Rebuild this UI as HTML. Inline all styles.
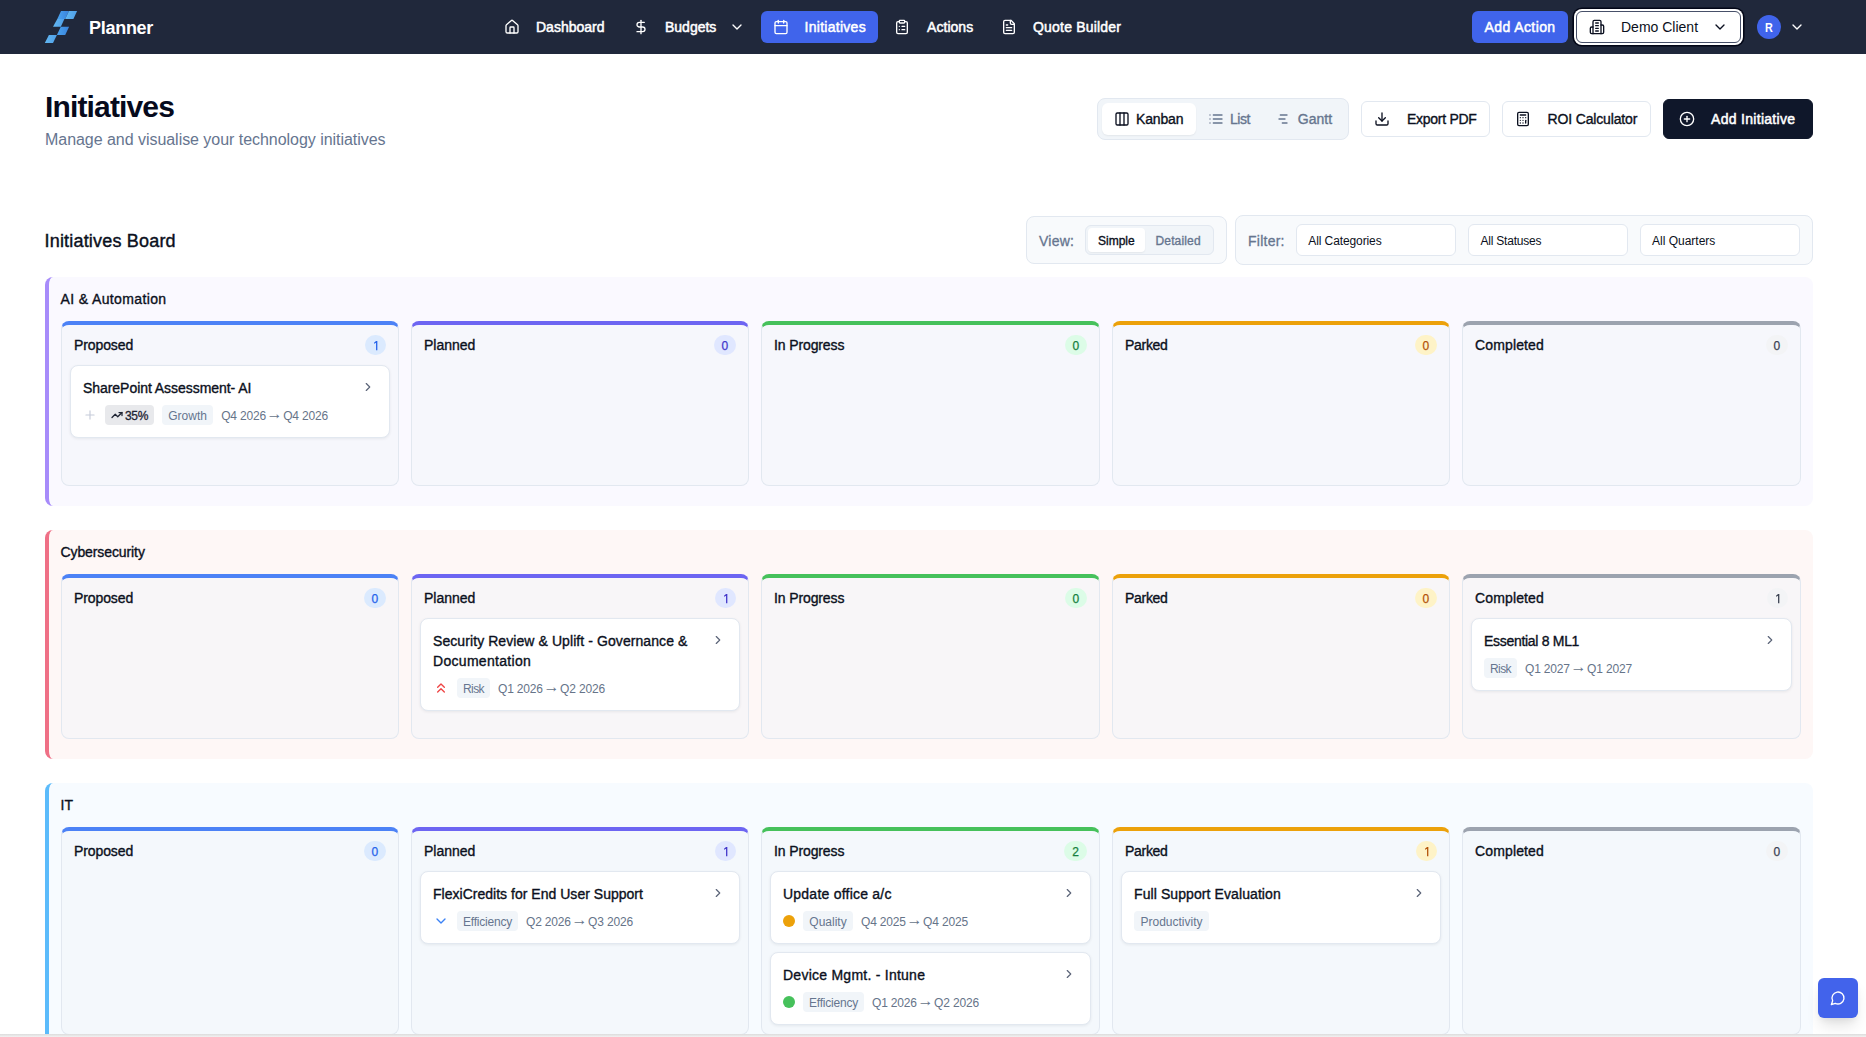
<!DOCTYPE html>
<html lang="en">
<head>
<meta charset="utf-8">
<title>Planner - Initiatives</title>
<style>
*{box-sizing:border-box;margin:0;padding:0}
html,body{width:1866px;height:1037px;overflow:hidden;background:#fff}
body{font-family:"Liberation Sans",sans-serif;color:#0b1020;position:relative;-webkit-font-smoothing:antialiased}
.abs{position:absolute}
svg.ic{fill:none;stroke:currentColor;stroke-width:2;stroke-linecap:round;stroke-linejoin:round;display:block;flex:none}
.t{position:absolute;white-space:nowrap;line-height:20px}
.sb{-webkit-text-stroke:0.35px currentColor}
#nav .sb{-webkit-text-stroke:0.5px currentColor}

/* NAV */
#nav{position:absolute;left:0;top:0;width:1866px;height:54px;background:#20283b}
#nav .t{color:#fff;font-size:14px;top:17px}
#nav svg.ic{position:absolute;color:#fff;width:16px;height:16px;top:19px}
.navact{position:absolute;left:761px;top:11px;width:117px;height:32px;border-radius:6px;background:#4064eb}
#addaction{position:absolute;left:1472px;top:11px;width:96px;height:32px;border-radius:6px;background:#4064eb}
#client{position:absolute;left:1576px;top:11px;width:165px;height:32px;border-radius:6px;background:#fff;border:1px solid #475069;box-shadow:0 0 0 2px #fff,0 0 0 3.6px #020617}
#avatar{position:absolute;left:1757px;top:15px;width:24px;height:24px;border-radius:50%;background:#4064eb}

/* HEADER */
#h1{left:45px;top:87px;font-size:30px;line-height:40px;font-weight:bold;letter-spacing:-0.85px;color:#060a1c}
#sub{left:45px;top:128.2px;letter-spacing:-0.04px;font-size:16px;line-height:24px;color:#66758f}
#tabs{position:absolute;left:1097px;top:98px;width:252px;height:42px;border-radius:8px;background:#f1f5f9;border:1px solid #e2e8f0}
#tabact{position:absolute;left:1102px;top:103px;width:94px;height:32px;border-radius:6px;background:#fff;box-shadow:0 1px 2px rgba(0,0,0,.06)}
.btn{position:absolute;border-radius:6px;background:#fff;border:1px solid #e2e8f0}
.hb{font-size:14px;top:109px;color:#0b1020}
.hic{position:absolute;width:16px;height:16px;top:111px}

/* BOARD TOOLBAR */
#bh{left:44.5px;top:229px;letter-spacing:0.19px;font-size:18px;line-height:24px;color:#0b1020;-webkit-text-stroke:0.4px currentColor}
.box{position:absolute;border-radius:8px;background:#f8fafc;border:1px solid #e2e8f0}
.lbl{font-size:14px;color:#66758f;top:231px;-webkit-text-stroke:0.3px currentColor}
#tog{position:absolute;left:1085px;top:225px;width:129px;height:30px;border-radius:6px;background:#f1f5f9;border:1px solid #e2e8f0}
#togact{position:absolute;left:1088px;top:228px;width:57px;height:24px;border-radius:4px;background:#fff;box-shadow:0 1px 2px rgba(0,0,0,.06)}
.tg{font-size:12px;top:231px}
.sel{position:absolute;top:224px;width:160px;height:32px;border-radius:6px;background:#fff;border:1px solid #e2e8f0}
.selt{font-size:12px;top:231px;color:#0b1020}

/* GROUPS */
.grp{position:absolute;left:45px;width:1768px;border-left:4px solid;border-radius:8px}
.g1{top:277px;height:229px;border-color:#a78bfa;background:#faf9ff}
.g2{top:530px;height:229px;border-color:#ef7086;background:#fef7f6}
.g3{top:783px;height:300px;border-color:#5bbbfb;background:#f7fbff}
.gt{left:11.5px;top:12px;font-size:14px;color:#0b1020;-webkit-text-stroke:0.35px currentColor}
.col{position:absolute;top:44px;width:338px;height:165px;border:1px solid #e2e8f0;border-top:4px solid;border-radius:8px;background:rgba(241,245,249,.5)}
.g3 .col{height:208px}
.c0{left:12px}.c1{left:362px}.c2{left:712px;width:339px}.c3{left:1063px}.c4{left:1413px;width:339px}
.s0{border-top-color:#4c82f6}.s1{border-top-color:#6d65f2}.s2{border-top-color:#46c15b}.s3{border-top-color:#eca10a}.s4{border-top-color:#9ca3af}
.ct{left:12px;top:10px;font-size:14px;color:#0b1020;-webkit-text-stroke:0.35px currentColor}
.cnt{position:absolute;right:12px;top:10px;width:20px;height:20px;border-radius:10px;font-size:12px;line-height:22px;text-align:center;-webkit-text-stroke:0.25px currentColor}
.s0 .cnt{background:#dbeafe;color:#2563eb}
.s1 .cnt{background:#e0e7ff;color:#4338ca}
.s2 .cnt{background:#dcfce7;color:#15803d}
.s3 .cnt{background:#fef3c7;color:#b45309}
.s4 .cnt{background:#f3f4f6;color:#3b4252}
.card{position:absolute;left:8px;right:8px;top:40px;height:73px;border-radius:8px;background:#fff;border:1px solid #e2e8f0;box-shadow:0 1px 3px rgba(15,23,42,.07)}
.card.two{height:93px}
.card.n2{top:121px}
.ctl{position:absolute;left:12px;top:13px;font-size:14px;line-height:19.5px;color:#0b1020;-webkit-text-stroke:0.35px currentColor;white-space:nowrap}
.cchev{position:absolute;right:14.4px;top:14px;width:14px;height:14px;color:#5b6478}
.row{position:absolute;left:12px;bottom:12.5px;height:20px;display:flex;align-items:center;gap:8px;white-space:nowrap}
.bdg{height:20px;line-height:22px;padding:0;text-align:center;border-radius:4px;background:#f1f5f9;color:#66758f;font-size:12px}
.roi{display:flex;align-items:center;height:20px;padding:0 6px;border-radius:4px;background:#e8e9ec;color:#1e2433;font-size:12px;gap:2px;letter-spacing:-0.3px;-webkit-text-stroke:0.3px currentColor}
.date{font-size:12px;color:#667489;line-height:20px;letter-spacing:-0.17px;position:relative;top:1px}
.ar{margin:0 0.6px;font-size:16px;line-height:0;letter-spacing:0;position:relative;top:-0.5px}
.dot{width:12px;height:12px;border-radius:50%;flex:none}

#chat{position:absolute;left:1818px;top:978px;width:40px;height:40px;border-radius:6px;background:#4263eb;box-shadow:0 10px 15px -3px rgba(0,0,0,.12),0 4px 6px -2px rgba(0,0,0,.06)}
#strip{position:absolute;left:0;top:1034px;width:1866px;height:3px;background:linear-gradient(#dcdcdc,#f2f2f2)}
</style>
</head>
<body>

<!-- ============ NAV ============ -->
<div id="nav">
  <svg class="abs" style="left:44px;top:10px" width="34" height="34" viewBox="44 10 34 34">
    <defs>
      <linearGradient id="gd" x1="0" y1="0" x2="1" y2="0"><stop offset="0" stop-color="#4aa3ef"/><stop offset="1" stop-color="#3a83dc"/></linearGradient>
      <linearGradient id="gl" x1="0" y1="0" x2="1" y2="0"><stop offset="0" stop-color="#62b8f2"/><stop offset="1" stop-color="#4f9fe8"/></linearGradient>
    </defs>
    <polygon points="61,10.9 68.9,10.9 65.2,18.9 57.3,18.9" fill="url(#gd)"/>
    <polygon points="68.9,10.9 77.1,10.9 73.4,18.9 65.2,18.9" fill="url(#gl)"/>
    <polygon points="57.3,18.9 64.4,18.9 60.8,26.8 53,26.8" fill="url(#gl)"/>
    <polygon points="60.8,26.8 69.1,26.8 65.2,34.9 56.9,34.9" fill="url(#gd)"/>
    <polygon points="48.9,34.9 56.9,34.9 53,43 44.8,43" fill="url(#gl)"/>
  </svg>
  <div class="t" style="left:89px;top:16px;font-size:18px;line-height:24px;font-weight:bold;letter-spacing:-0.28px" id="t_planner">Planner</div>

  <svg class="ic" style="left:504px" viewBox="0 0 24 24"><path d="M15 21v-8a1 1 0 0 0-1-1h-4a1 1 0 0 0-1 1v8"/><path d="M3 10a2 2 0 0 1 .709-1.528l7-5.999a2 2 0 0 1 2.582 0l7 5.999A2 2 0 0 1 21 10v9a2 2 0 0 1-2 2H5a2 2 0 0 1-2-2z"/></svg>
  <div class="t sb" style="left:536px" id="t_dash">Dashboard</div>

  <svg class="ic" style="left:633px" viewBox="0 0 24 24"><line x1="12" x2="12" y1="2" y2="22"/><path d="M17 5H9.5a3.5 3.5 0 0 0 0 7h5a3.5 3.5 0 0 1 0 7H6"/></svg>
  <div class="t sb" style="left:665px" id="t_budg">Budgets</div>
  <svg class="ic" style="left:729px" viewBox="0 0 24 24"><path d="m6 9 6 6 6-6"/></svg>

  <div class="navact"></div>
  <svg class="ic" style="left:773px" viewBox="0 0 24 24"><path d="M8 2v4"/><path d="M16 2v4"/><rect width="18" height="18" x="3" y="4" rx="2"/><path d="M3 10h18"/></svg>
  <div class="t sb" style="left:804.5px;letter-spacing:0.28px" id="t_init">Initiatives</div>

  <svg class="ic" style="left:894px" viewBox="0 0 24 24"><rect width="8" height="4" x="8" y="2" rx="1" ry="1"/><path d="M16 4h2a2 2 0 0 1 2 2v14a2 2 0 0 1-2 2H6a2 2 0 0 1-2-2V6a2 2 0 0 1 2-2h2"/><path d="M12 11h4"/><path d="M12 16h4"/><path d="M8 11h.01"/><path d="M8 16h.01"/></svg>
  <div class="t sb" style="left:927px;letter-spacing:0.05px" id="t_act">Actions</div>

  <svg class="ic" style="left:1001px" viewBox="0 0 24 24"><path d="M15 2H6a2 2 0 0 0-2 2v16a2 2 0 0 0 2 2h12a2 2 0 0 0 2-2V7Z"/><path d="M14 2v4a2 2 0 0 0 2 2h4"/><path d="M10 9H8"/><path d="M16 13H8"/><path d="M16 17H8"/></svg>
  <div class="t sb" style="left:1033px;letter-spacing:0.2px" id="t_quote">Quote Builder</div>

  <div id="addaction"></div>
  <div class="t sb" style="left:1484.6px;letter-spacing:0.4px" id="t_addact">Add Action</div>

  <div id="client"></div>
  <svg class="ic" style="left:1589px;color:#0b1020" viewBox="0 0 24 24"><path d="M6 22V4a2 2 0 0 1 2-2h8a2 2 0 0 1 2 2v18Z"/><path d="M6 12H4a2 2 0 0 0-2 2v6a2 2 0 0 0 2 2h2"/><path d="M18 9h2a2 2 0 0 1 2 2v9a2 2 0 0 1-2 2h-2"/><path d="M10 6h4"/><path d="M10 10h4"/><path d="M10 14h4"/><path d="M10 18h4"/></svg>
  <div class="t" style="left:1621px;color:#0b1020" id="t_client">Demo Client</div>
  <svg class="ic" style="left:1712px;color:#0b1020" viewBox="0 0 24 24"><path d="m6 9 6 6 6-6"/></svg>

  <div id="avatar"></div>
  <div class="t" style="left:1765px;top:18px;font-size:12px;font-weight:bold;-webkit-text-stroke:0;transform:scaleX(.9);transform-origin:left" id="t_R">R</div>
  <svg class="ic" style="left:1789px" viewBox="0 0 24 24"><path d="m6 9 6 6 6-6"/></svg>
</div>

<!-- ============ PAGE HEADER ============ -->
<div class="t" id="h1">Initiatives</div>
<div class="t" id="sub">Manage and visualise your technology initiatives</div>

<div id="tabs"></div>
<div id="tabact"></div>
<svg class="ic hic" style="left:1114px" viewBox="0 0 24 24"><rect width="18" height="18" x="3" y="3" rx="2"/><path d="M9 3v18"/><path d="M15 3v18"/></svg>
<div class="t hb sb" style="left:1136px;letter-spacing:-0.15px" id="t_kanban">Kanban</div>
<svg class="ic hic" style="left:1208px;color:#66758f" viewBox="0 0 24 24"><path d="M3 12h.01"/><path d="M3 18h.01"/><path d="M3 6h.01"/><path d="M8 12h13"/><path d="M8 18h13"/><path d="M8 6h13"/></svg>
<div class="t hb sb" style="left:1230px;color:#66758f;letter-spacing:-0.45px" id="t_list">List</div>
<svg class="ic hic" style="left:1275px;color:#66758f" viewBox="0 0 24 24"><path d="M8 6h10"/><path d="M6 12h9"/><path d="M11 18h7"/></svg>
<div class="t hb sb" style="left:1297.8px;color:#66758f" id="t_gantt">Gantt</div>

<div class="btn" style="left:1361px;top:101px;width:129px;height:36px"></div>
<svg class="ic hic" style="left:1374px" viewBox="0 0 24 24"><path d="M21 15v4a2 2 0 0 1-2 2H5a2 2 0 0 1-2-2v-4"/><polyline points="7 10 12 15 17 10"/><line x1="12" x2="12" y1="15" y2="3"/></svg>
<div class="t hb sb" style="left:1407px;letter-spacing:-0.27px" id="t_export">Export PDF</div>

<div class="btn" style="left:1502px;top:101px;width:149px;height:36px"></div>
<svg class="ic hic" style="left:1515px" viewBox="0 0 24 24"><rect width="16" height="20" x="4" y="2" rx="2"/><line x1="8" x2="16" y1="6" y2="6"/><line x1="16" x2="16" y1="14" y2="18"/><path d="M16 10h.01"/><path d="M12 10h.01"/><path d="M8 10h.01"/><path d="M12 14h.01"/><path d="M8 14h.01"/><path d="M12 18h.01"/><path d="M8 18h.01"/></svg>
<div class="t hb sb" style="left:1547.5px;letter-spacing:-0.15px" id="t_roi">ROI Calculator</div>

<div class="btn" style="left:1663px;top:99px;width:150px;height:40px;background:#0f172a;border-color:#0f172a"></div>
<svg class="ic hic" style="left:1679px;color:#fff" viewBox="0 0 24 24"><circle cx="12" cy="12" r="10"/><path d="M8 12h8"/><path d="M12 8v8"/></svg>
<div class="t hb sb" style="left:1711px;color:#fff;letter-spacing:0.3px;-webkit-text-stroke:0.5px #fff" id="t_addinit">Add Initiative</div>

<div class="t" id="bh">Initiatives Board</div>
<div class="box" style="left:1026px;top:216px;width:201px;height:48px"></div>
<div class="t lbl" style="left:1039px;letter-spacing:0.25px" id="t_view">View:</div>
<div id="tog"></div><div id="togact"></div>
<div class="t tg sb" style="left:1098px;color:#0b1020" id="t_simple">Simple</div>
<div class="t tg sb" style="left:1155.5px;color:#66758f;letter-spacing:0.15px" id="t_detailed">Detailed</div>
<div class="box" style="left:1235px;top:215px;width:578px;height:50px"></div>
<div class="t lbl" style="left:1248px;letter-spacing:0.25px" id="t_filter">Filter:</div>
<div class="sel" style="left:1296px"></div><div class="t selt" style="left:1308.3px;letter-spacing:-0.1px" id="t_cat">All Categories</div>
<div class="sel" style="left:1468px"></div><div class="t selt" style="left:1480.5px;letter-spacing:-0.22px" id="t_stat">All Statuses</div>
<div class="sel" style="left:1640px"></div><div class="t selt" style="left:1652px" id="t_quar">All Quarters</div>
<div class="grp g1">
  <div class="t gt" style="letter-spacing:0.37px">AI &amp; Automation</div>
  <div class="col c0 s0"><div class="t ct" style="letter-spacing:-0.1px">Proposed</div><div class="cnt" style="width:21px"><svg style="position:absolute;left:7.8px;top:5.9px" width="5" height="10" viewBox="0 0 5 10"><path d="M3.05 0h1.3v9.3H3.05V1.75L1 2.85V1.65Z" fill="currentColor"/></svg></div><div class="card "><div class="ctl" style="letter-spacing:-0.05px">SharePoint Assessment- AI</div><svg class="ic cchev" viewBox="0 0 24 24"><path d="m9 18 6-6-6-6"/></svg><div class="row"><svg class="ic" style="width:14px;height:14px;color:#c6ccd9" viewBox="0 0 24 24"><path d="M5 12h14"/><path d="M12 5v14"/></svg><div class="roi"><svg class="ic" style="width:12px;height:12px;stroke-width:2.5" viewBox="0 0 24 24"><polyline points="22 7 13.5 15.5 8.5 10.5 2 17"/><polyline points="16 7 22 7 22 13"/></svg><span style="position:relative;top:1px">35%</span></div><div class="bdg" style="width:51px;letter-spacing:0px">Growth</div><div class="date">Q4 2026<span class="ar">→</span>Q4 2026</div></div></div></div>
  <div class="col c1 s1"><div class="t ct">Planned</div><div class="cnt" style="width:22.5px">0</div></div>
  <div class="col c2 s2"><div class="t ct" style="letter-spacing:-0.12px">In Progress</div><div class="cnt" style="width:22.5px">0</div></div>
  <div class="col c3 s3"><div class="t ct" style="letter-spacing:-0.3px">Parked</div><div class="cnt" style="width:22.5px">0</div></div>
  <div class="col c4 s4"><div class="t ct" style="letter-spacing:0.14px">Completed</div><div class="cnt" style="width:22.5px">0</div></div>
</div>
<div class="grp g2">
  <div class="t gt" style="letter-spacing:-0.1px">Cybersecurity</div>
  <div class="col c0 s0"><div class="t ct" style="letter-spacing:-0.1px">Proposed</div><div class="cnt" style="width:22.5px">0</div></div>
  <div class="col c1 s1"><div class="t ct">Planned</div><div class="cnt" style="width:21px"><svg style="position:absolute;left:7.8px;top:5.9px" width="5" height="10" viewBox="0 0 5 10"><path d="M3.05 0h1.3v9.3H3.05V1.75L1 2.85V1.65Z" fill="currentColor"/></svg></div><div class="card two"><div class="ctl"><span style="letter-spacing:0.08px">Security Review &amp; Uplift - Governance &amp;</span><br><span style="letter-spacing:0.3px">Documentation</span></div><svg class="ic cchev" viewBox="0 0 24 24"><path d="m9 18 6-6-6-6"/></svg><div class="row"><svg class="ic" style="width:16px;height:16px;color:#ef4444" viewBox="0 0 24 24"><path d="m17 11-5-5-5 5"/><path d="m17 18-5-5-5 5"/></svg><div class="bdg" style="width:33px;letter-spacing:-0.6px">Risk</div><div class="date">Q1 2026<span class="ar">→</span>Q2 2026</div></div></div></div>
  <div class="col c2 s2"><div class="t ct" style="letter-spacing:-0.12px">In Progress</div><div class="cnt" style="width:22.5px">0</div></div>
  <div class="col c3 s3"><div class="t ct" style="letter-spacing:-0.3px">Parked</div><div class="cnt" style="width:22.5px">0</div></div>
  <div class="col c4 s4"><div class="t ct" style="letter-spacing:0.14px">Completed</div><div class="cnt" style="width:21px"><svg style="position:absolute;left:7.8px;top:5.9px" width="5" height="10" viewBox="0 0 5 10"><path d="M3.05 0h1.3v9.3H3.05V1.75L1 2.85V1.65Z" fill="currentColor"/></svg></div><div class="card "><div class="ctl" style="letter-spacing:-0.3px">Essential 8 ML1</div><svg class="ic cchev" viewBox="0 0 24 24"><path d="m9 18 6-6-6-6"/></svg><div class="row"><div class="bdg" style="width:33px;letter-spacing:-0.6px">Risk</div><div class="date">Q1 2027<span class="ar">→</span>Q1 2027</div></div></div></div>
</div>
<div class="grp g3">
  <div class="t gt">IT</div>
  <div class="col c0 s0"><div class="t ct" style="letter-spacing:-0.1px">Proposed</div><div class="cnt" style="width:22.5px">0</div></div>
  <div class="col c1 s1"><div class="t ct">Planned</div><div class="cnt" style="width:21px"><svg style="position:absolute;left:7.8px;top:5.9px" width="5" height="10" viewBox="0 0 5 10"><path d="M3.05 0h1.3v9.3H3.05V1.75L1 2.85V1.65Z" fill="currentColor"/></svg></div><div class="card "><div class="ctl" style="letter-spacing:0.02px">FlexiCredits for End User Support</div><svg class="ic cchev" viewBox="0 0 24 24"><path d="m9 18 6-6-6-6"/></svg><div class="row"><svg class="ic" style="width:16px;height:16px;color:#3b82f6" viewBox="0 0 24 24"><path d="m6 9 6 6 6-6"/></svg><div class="bdg" style="width:61px;letter-spacing:-0.2px">Efficiency</div><div class="date">Q2 2026<span class="ar">→</span>Q3 2026</div></div></div></div>
  <div class="col c2 s2"><div class="t ct" style="letter-spacing:-0.12px">In Progress</div><div class="cnt" style="width:23px">2</div><div class="card "><div class="ctl" style="letter-spacing:0.23px">Update office a/c</div><svg class="ic cchev" viewBox="0 0 24 24"><path d="m9 18 6-6-6-6"/></svg><div class="row"><div class="dot" style="background:#eca10a"></div><div class="bdg" style="width:50px;letter-spacing:0px">Quality</div><div class="date">Q4 2025<span class="ar">→</span>Q4 2025</div></div></div><div class="card n2"><div class="ctl" style="letter-spacing:0.25px">Device Mgmt. - Intune</div><svg class="ic cchev" viewBox="0 0 24 24"><path d="m9 18 6-6-6-6"/></svg><div class="row"><div class="dot" style="background:#46c15b"></div><div class="bdg" style="width:61px;letter-spacing:-0.2px">Efficiency</div><div class="date">Q1 2026<span class="ar">→</span>Q2 2026</div></div></div></div>
  <div class="col c3 s3"><div class="t ct" style="letter-spacing:-0.3px">Parked</div><div class="cnt" style="width:21px"><svg style="position:absolute;left:7.8px;top:5.9px" width="5" height="10" viewBox="0 0 5 10"><path d="M3.05 0h1.3v9.3H3.05V1.75L1 2.85V1.65Z" fill="currentColor"/></svg></div><div class="card "><div class="ctl" style="letter-spacing:0.09px">Full Support Evaluation</div><svg class="ic cchev" viewBox="0 0 24 24"><path d="m9 18 6-6-6-6"/></svg><div class="row"><div class="bdg" style="width:75px;letter-spacing:0px">Productivity</div></div></div></div>
  <div class="col c4 s4"><div class="t ct" style="letter-spacing:0.14px">Completed</div><div class="cnt" style="width:22.5px">0</div></div>
</div>
<div id="chat"><svg class="ic" style="position:absolute;left:12px;top:12px;width:16px;height:16px;color:#fff" viewBox="0 0 24 24"><path d="M7.9 20A9 9 0 1 0 4 16.1L2 22Z"/></svg></div>
<div id="strip"></div>


</body>
</html>
